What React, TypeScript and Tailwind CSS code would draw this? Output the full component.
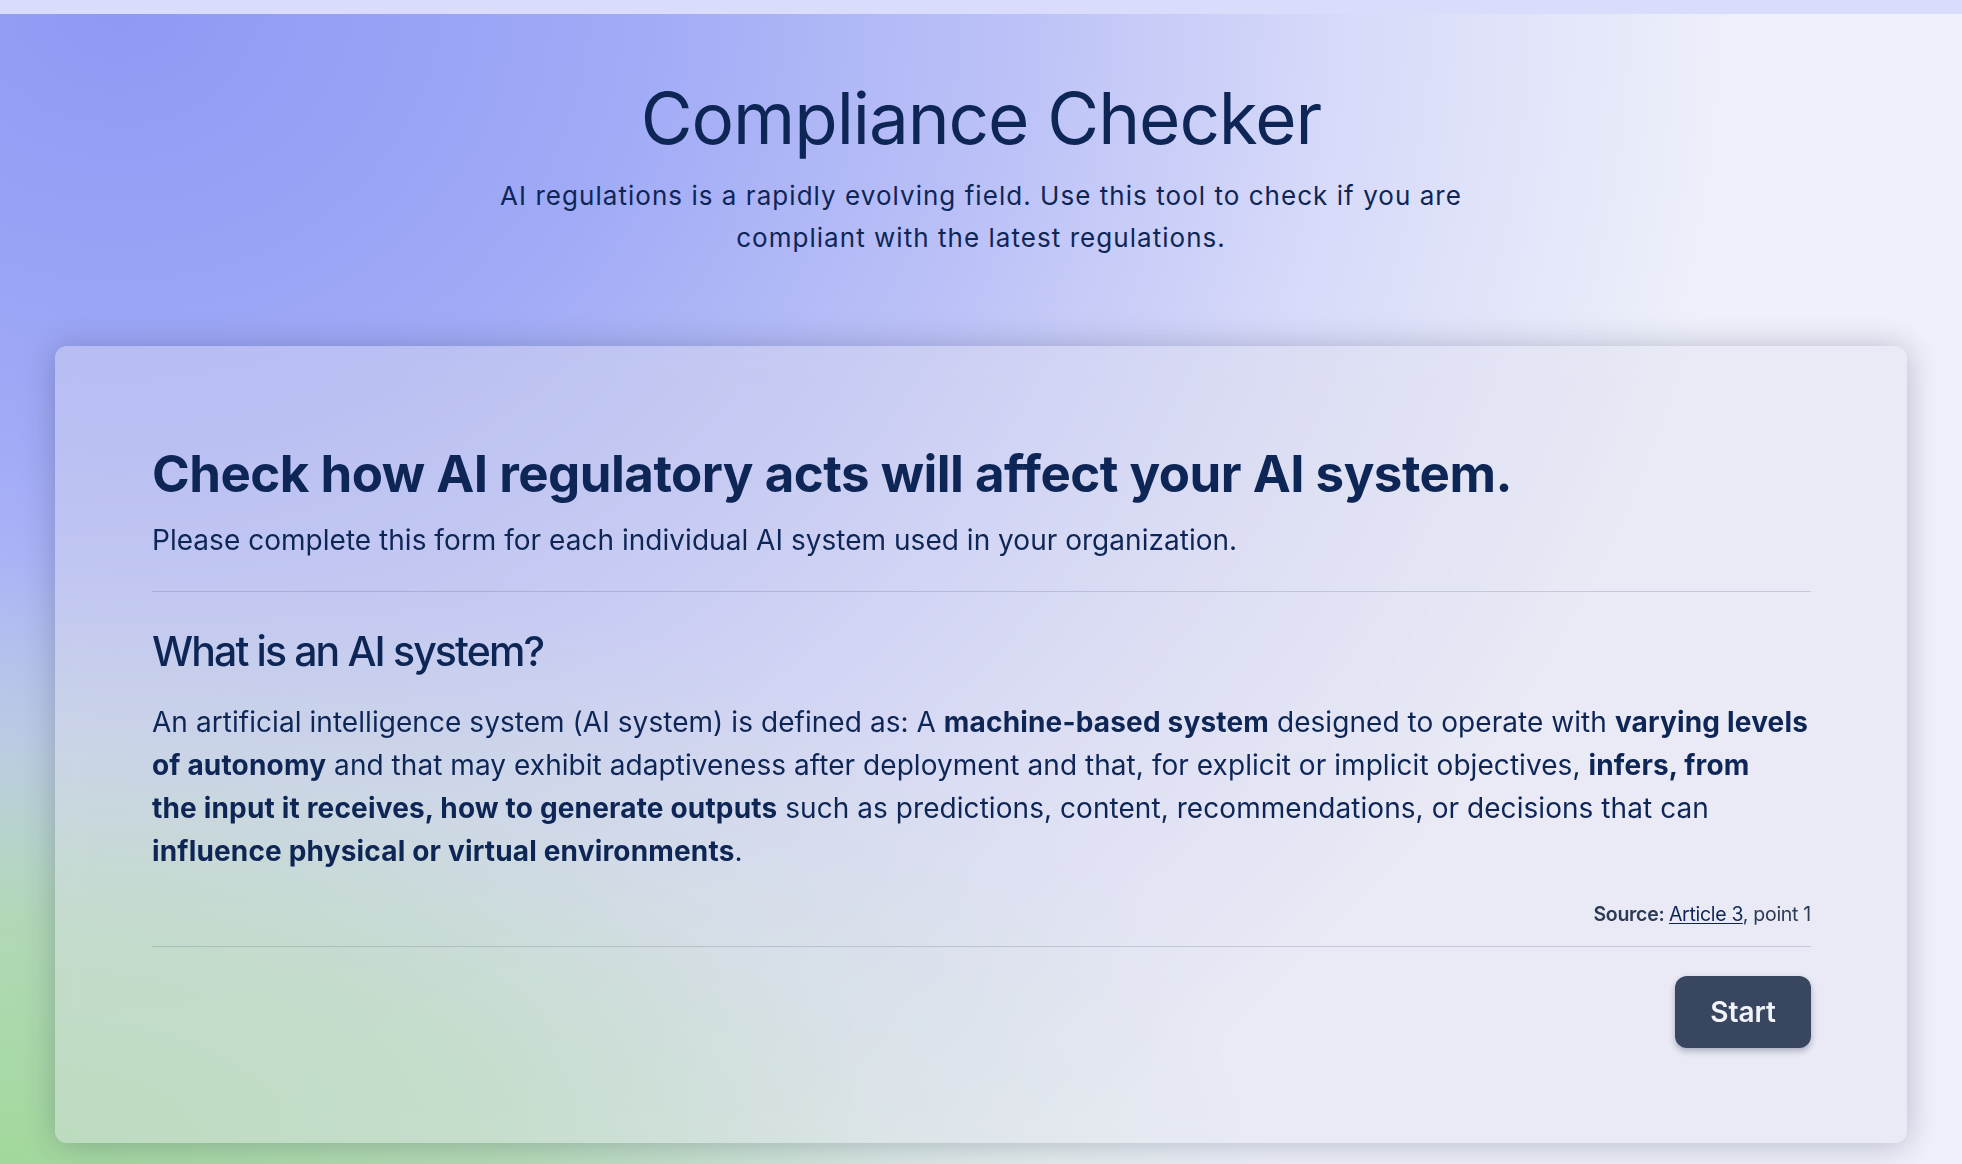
import React from "react";

export default function App() {
  return (
    <div
      className="min-h-screen w-full flex flex-col text-[#0e2656] bg-[#eef0fa] bg-[radial-gradient(ellipse_65%_52%_at_0%_100%,rgba(162,216,156,1)_0%,rgba(170,218,166,0.8)_40%,rgba(190,225,190,0.35)_70%,rgba(238,240,250,0)_100%),radial-gradient(ellipse_92%_135%_at_6%_0%,#8e99f5_0%,#a0aaf6_28%,#bcc2f7_50%,#d7daf9_68%,rgba(238,240,250,0)_90%)]"
      style={{ fontFamily: "Inter, Roboto, 'Liberation Sans', sans-serif" }}
    >
      <div className="h-[14px] w-full bg-[#d9dcfa]" />
      <header className="flex flex-col items-center pt-[69px]">
        <h1 className="text-[71px] leading-none font-normal tracking-[-0.015em]">
          Compliance Checker
        </h1>
        <p className="mt-[21px] text-center text-[26px] leading-[42px] tracking-[0.04em] whitespace-nowrap">
          AI regulations is a rapidly evolving field. Use this tool to check if you are
          <br />
          compliant with the latest regulations.
        </p>
      </header>
      <main className="px-[55px] pt-[87px] pb-[18px]">
        <section className="rounded-xl bg-[rgba(224,225,238,0.4)] backdrop-blur-md shadow-[0_2px_32px_rgba(40,45,80,0.28)] pl-[97px] pr-[96px] pt-[102px] pb-[95px]">
          <h2 className="text-[51px] leading-none font-bold tracking-[-0.01em]">
            Check how AI regulatory acts will affect your AI system.
          </h2>
          <p className="mt-[27px] text-[28px] leading-none tracking-[0.001em]">
            Please complete this form for each individual AI system used in your organization.
          </p>
          <div className="mt-[37px] h-px bg-[rgba(30,40,80,0.16)]" />
          <h3 className="mt-[39px] text-[41px] leading-none font-medium tracking-[-0.046em]">
            What is an AI system?
          </h3>
          <p className="mt-[29px] text-[28px] leading-[43px] tracking-[0.002em] whitespace-nowrap">
            An artificial intelligence system (AI system) is defined as: A{" "}
            <b className="font-bold tracking-[0.006em]">machine-based system</b> designed to operate with{" "}
            <b className="font-bold tracking-[0.006em]">varying levels</b>
            <br />
            <b className="font-bold tracking-[0.006em]">of autonomy</b> and that may exhibit adaptiveness after deployment and that, for explicit or implicit objectives,{" "}
            <b className="font-bold tracking-[0.006em]">infers, from</b>
            <br />
            <b className="font-bold tracking-[0.006em]">the input it receives, how to generate outputs</b> such as predictions, content, recommendations, or decisions that can
            <br />
            <b className="font-bold tracking-[0.006em]">influence physical or virtual environments</b>.
          </p>
          <p className="mt-[32px] text-right text-[19.5px] leading-none tracking-[-0.015em] text-[#2c3a55]">
            <span className="font-semibold">Source: </span>
            <a className="underline underline-offset-2 text-[#0e2656]" href="#">
              Article 3
            </a>
            , point 1
          </p>
          <div className="mt-[21px] h-px bg-[rgba(30,40,80,0.16)]" />
          <div className="mt-[29px] flex justify-end">
            <button className="h-[72px] px-[35px] rounded-xl bg-[#38475f] text-[#f1f3f9] text-[28px] font-semibold shadow-[0_3px_6px_rgba(20,30,60,0.3)]">
              Start
            </button>
          </div>
        </section>
      </main>
    </div>
  );
}
